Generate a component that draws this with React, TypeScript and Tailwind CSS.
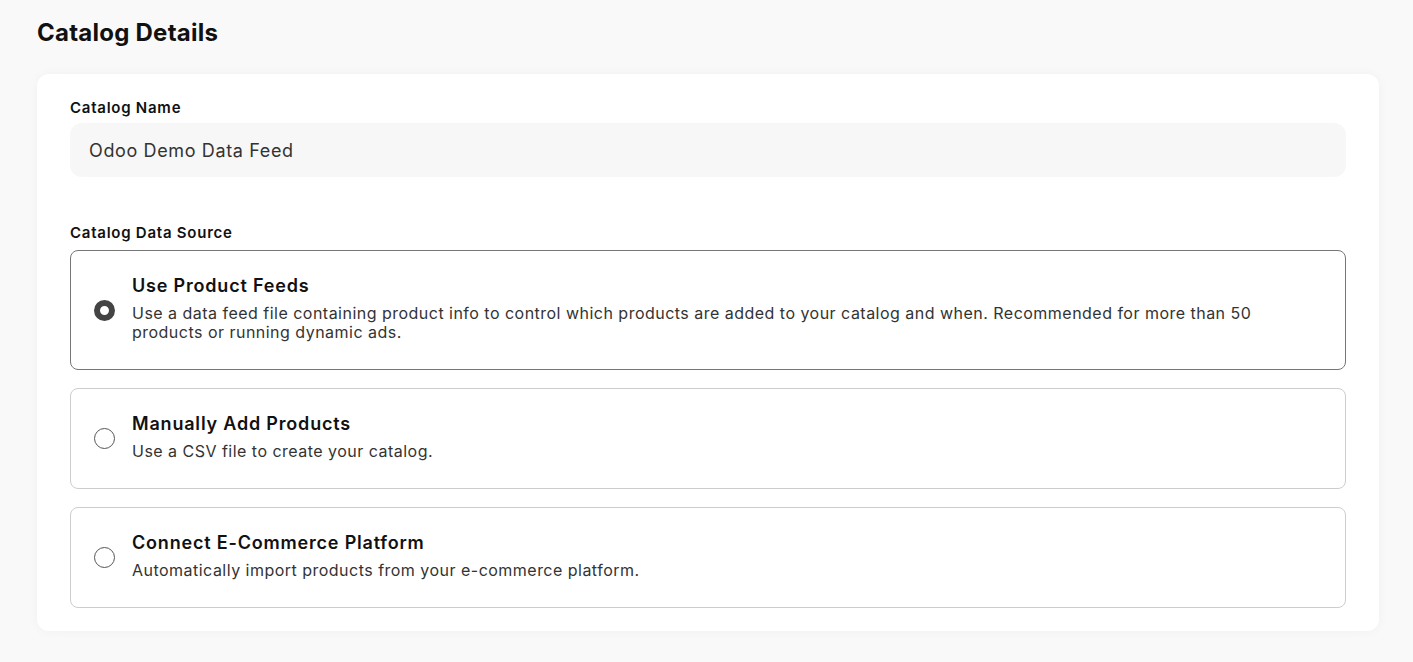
import { useState } from "react";

type TOption = {
  id: string;
  title: string;
  description: string;
};

const options: TOption[] = [
  {
    id: "feeds",
    title: "Use Product Feeds",
    description:
      "Use a data feed file containing product info to control which products are added to your catalog and when. Recommended for more than 50 products or running dynamic ads.",
  },
  {
    id: "manual",
    title: "Manually Add Products",
    description: "Use a CSV file to create your catalog.",
  },
  {
    id: "platform",
    title: "Connect E-Commerce Platform",
    description: "Automatically import products from your e-commerce platform.",
  },
];

export default function App() {
  const [source, setSource] = useState("feeds");
  const [name, setName] = useState("Odoo Demo Data Feed");

  return (
    <div className="min-h-screen bg-[#f9f9f9] px-[37px] pt-[17px] pb-8 font-['Inter',sans-serif] text-[#111]">
      <h1 className="text-[24px] font-bold leading-[32px] tracking-[0.01em]">Catalog Details</h1>
      <div className="mt-[25px] w-[1342px] rounded-[12px] bg-white px-[33px] pt-[23px] pb-[23px] shadow-[0_0_12px_rgba(0,0,0,0.04)]">
        <label className="block text-[15px] font-semibold leading-[22px] tracking-[0.05em]">Catalog Name</label>
        <input
          value={name}
          onChange={(e) => setName(e.target.value)}
          className="mt-[4px] block h-[54px] w-full rounded-[12px] bg-[#f7f7f7] px-[19px] text-[18px] tracking-[0.035em] text-[#333] outline-none"
        />
        <label className="mt-[45px] block text-[15px] font-semibold leading-[22px] tracking-[0.05em]">
          Catalog Data Source
        </label>
        <div className="mt-[6px] flex flex-col gap-[18px]">
          {options.map((opt) => (
            <RadioCard
              key={opt.id}
              option={opt}
              selected={source === opt.id}
              onSelect={() => setSource(opt.id)}
            />
          ))}
        </div>
      </div>
    </div>
  );
}

function RadioCard({
  option,
  selected,
  onSelect,
}: {
  option: TOption;
  selected: boolean;
  onSelect: () => void;
}) {
  return (
    <div
      onClick={onSelect}
      className={
        selected
          ? "flex cursor-pointer items-center rounded-[8px] border border-[#767676] pl-[23px] pr-[40px] pt-[24px] pb-[27px]"
          : "flex cursor-pointer items-center rounded-[8px] border border-[#cdcdcd] pl-[23px] pr-[40px] pt-[24px] pb-[27px]"
      }
    >
      <span
        className={
          selected
            ? "mt-[3px] box-border h-[21px] w-[21px] shrink-0 rounded-full border-[6px] border-[#444]"
            : "mt-[3px] box-border h-[21px] w-[21px] shrink-0 rounded-full border border-[#555]"
        }
      />
      <div className="ml-[17px]">
        <div className="text-[18px] font-semibold leading-[22px] tracking-[0.045em]">{option.title}</div>
        <div className="mt-[7px] text-[16px] leading-[19px] tracking-[0.03em] text-[#333]">
          {option.description}
        </div>
      </div>
    </div>
  );
}
